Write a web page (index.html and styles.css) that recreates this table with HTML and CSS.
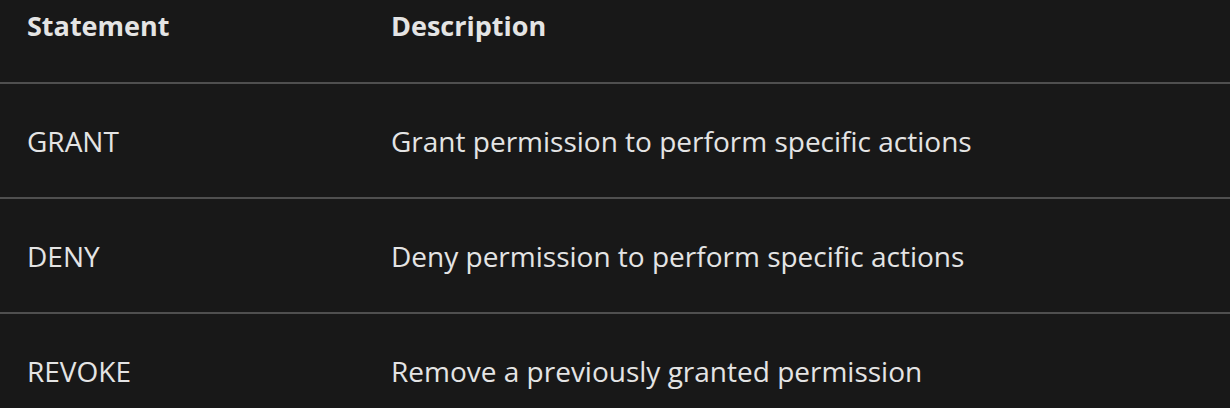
FILE: index.html
```html
<!DOCTYPE html>
<html lang="en">
<head>
<meta charset="utf-8">
<title>Permissions</title>
<link rel="stylesheet" href="styles.css">
</head>
<body>
<div class="perm-table" role="table">
  <div class="row head-row" role="row">
    <div class="cell col-stmt" role="columnheader">Statement</div>
    <div class="cell col-desc" role="columnheader">Description</div>
  </div>
  <div class="row body-row" role="row">
    <div class="cell col-stmt" role="cell">GRANT</div>
    <div class="cell col-desc" role="cell">Grant permission to perform specific actions</div>
  </div>
  <div class="row body-row" role="row">
    <div class="cell col-stmt" role="cell">DENY</div>
    <div class="cell col-desc" role="cell">Deny permission to perform specific actions</div>
  </div>
  <div class="row body-row" role="row">
    <div class="cell col-stmt" role="cell">REVOKE</div>
    <div class="cell col-desc" role="cell">Remove a previously granted permission</div>
  </div>
</div>
</body>
</html>
```

FILE: styles.css
```css
html, body {
  margin: 0;
  padding: 0;
  background: #181818;
}
body {
  font-family: "Open Sans", "Noto Sans", sans-serif;
  color: #e4e4e4;
}
.perm-table {
  display: flex;
  flex-direction: column;
  font-size: 28px;
  line-height: 38px;
}
.row {
  display: grid;
  grid-template-columns: 391px 1fr;
  box-sizing: border-box;
}
.col-stmt {
  padding-left: 27px;
}
.head-row {
  height: 82px;
  padding-top: 7px;
  font-weight: 700;
  font-size: 27px;
  align-items: start;
}
.body-row {
  height: 115px;
  border-top: 2px solid #4f4f4f;
  align-items: center;
  font-weight: 400;
}
```
